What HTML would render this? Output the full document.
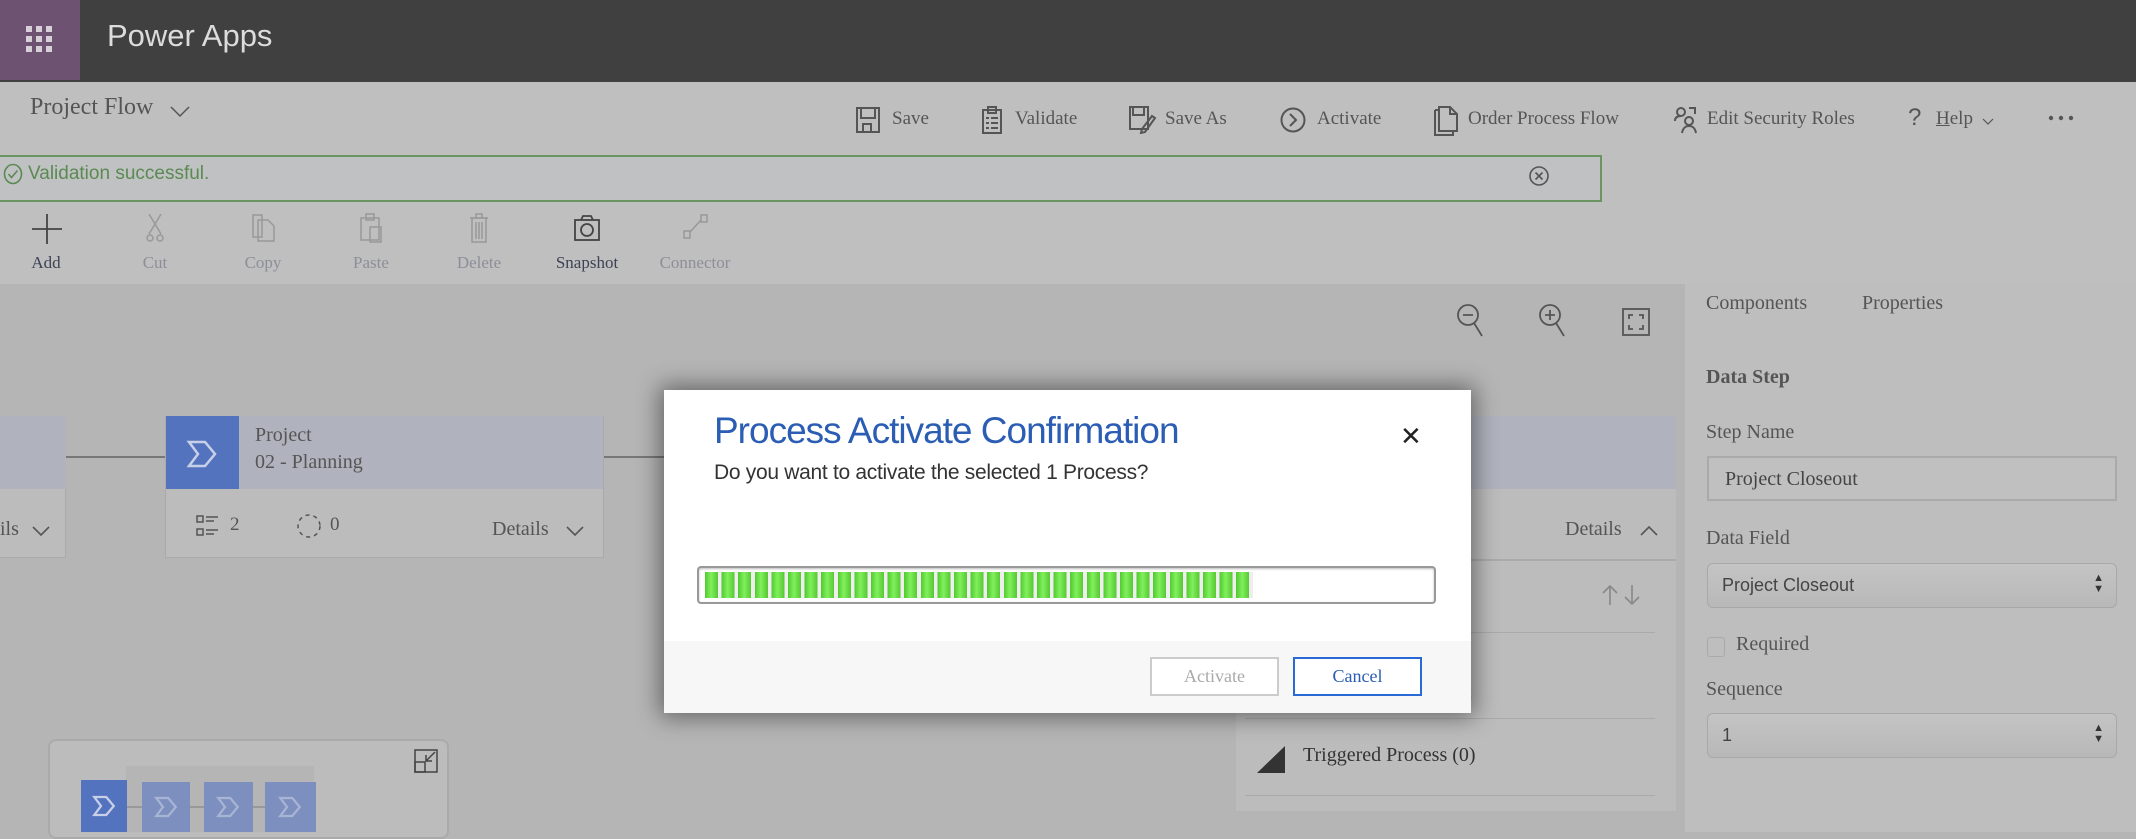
<!DOCTYPE html>
<html><head><meta charset="utf-8"><style>
*{margin:0;padding:0;box-sizing:border-box}
body{width:2136px;height:832px;overflow:hidden;background:#b5b5b5;position:relative;font-family:"Liberation Serif",serif;color:#555}
.a{position:absolute}
.s{font-family:"Liberation Sans",sans-serif}
.cmd{position:absolute;top:108px;font-size:19px;color:#555}
.tl{position:absolute;top:253px;font-size:17px;color:#8d8f98;transform:translateX(-50%)}
</style></head><body>
<div class="a" style="left:0;top:0;width:2136px;height:82px;background:#404040"></div>
<div class="a" style="left:0;top:0;width:80px;height:80px;background:#6e5272"></div>
<svg class="a" style="left:26px;top:26px" width="28" height="28" viewBox="0 0 28 28" fill="#d8d0d8"><rect x="0" y="0" width="6" height="6"/><rect x="10" y="0" width="6" height="6"/><rect x="20" y="0" width="6" height="6"/><rect x="0" y="10" width="6" height="6"/><rect x="10" y="10" width="6" height="6"/><rect x="20" y="10" width="6" height="6"/><rect x="0" y="20" width="6" height="6"/><rect x="10" y="20" width="6" height="6"/><rect x="20" y="20" width="6" height="6"/></svg>
<div class="a s" style="left:107px;top:18px;font-size:31px;color:#dcdcdc">Power Apps</div>
<div class="a" style="left:0;top:82px;width:2136px;height:202px;background:#bfbfbf"></div>
<div class="a" style="left:30px;top:94px;font-size:24px;color:#555">Project Flow</div>
<svg class="a" style="left:170px;top:106px" width="20" height="12" viewBox="0 0 20 12" fill="none" stroke="#555" stroke-width="1.5"><path d="M1 1l9 9 9-9"/></svg>
<svg class="a" style="left:856px;top:107px" width="24" height="26" viewBox="0 0 24 26" fill="none" stroke="#555" stroke-width="2"><rect x="1" y="1" width="22" height="24"/><rect x="5" y="1" width="14" height="10"/><rect x="7" y="17" width="8" height="8"/></svg>
<div class="cmd" style="left:892px">Save</div>
<svg class="a" style="left:982px;top:106px" width="20" height="28" viewBox="0 0 20 28" fill="none" stroke="#555" stroke-width="2"><rect x="1" y="4" width="18" height="23"/><rect x="6" y="1" width="8" height="6"/><path d="M4 12h3M9 12h7M4 17h3M9 17h7M4 22h3M9 22h7"/></svg>
<div class="cmd" style="left:1015px">Validate</div>
<svg class="a" style="left:1129px;top:106px" width="28" height="28" viewBox="0 0 28 28" fill="none" stroke="#555" stroke-width="2"><rect x="1" y="1" width="18" height="22"/><rect x="4" y="1" width="11" height="8"/><path d="M26 12l-10 14-4 1 1-4 10-13z"/></svg>
<div class="cmd" style="left:1165px">Save As</div>
<svg class="a" style="left:1280px;top:107px" width="26" height="26" viewBox="0 0 26 26" fill="none" stroke="#555" stroke-width="2"><circle cx="13" cy="13" r="11.5"/><path d="M10 7l6 6-6 6"/></svg>
<div class="cmd" style="left:1317px">Activate</div>
<svg class="a" style="left:1434px;top:106px" width="24" height="30" viewBox="0 0 24 30" fill="none" stroke="#555" stroke-width="2"><path d="M1 4h4M1 4v25h18v-4"/><path d="M5 1h11l7 7v17H5z"/><path d="M16 1v7h7"/></svg>
<div class="cmd" style="left:1468px">Order Process Flow</div>
<svg class="a" style="left:1674px;top:106px" width="26" height="28" viewBox="0 0 26 28" fill="none" stroke="#555" stroke-width="2"><circle cx="7" cy="6" r="4"/><path d="M1 15c0-4 3-5 6-5"/><path d="M15 2h6v6"/><circle cx="15" cy="15" r="4"/><path d="M8 27c1-5 3-7 7-7s6 2 7 7"/></svg>
<div class="cmd" style="left:1707px">Edit Security Roles</div>
<div class="cmd s" style="left:1908px;top:104px;font-size:24px;font-weight:300">?</div>
<div class="cmd" style="left:1936px"><u>H</u>elp</div>
<svg class="a" style="left:1982px;top:118px" width="12" height="8" viewBox="0 0 12 8" fill="none" stroke="#555" stroke-width="1.2"><path d="M1 1l5 5 5-5"/></svg>
<svg class="a" style="left:2048px;top:115px" width="26" height="6" fill="#555"><circle cx="3" cy="3" r="2.2"/><circle cx="13" cy="3" r="2.2"/><circle cx="23" cy="3" r="2.2"/></svg>
<div class="a" style="left:-2px;top:155px;width:1604px;height:47px;border:2px solid #6a9461;background:#c0c1c3"></div>
<svg class="a" style="left:3px;top:163px" width="20" height="22" viewBox="0 0 20 22" fill="none" stroke="#5a8a52" stroke-width="1.6"><ellipse cx="10" cy="11" rx="8.5" ry="9.5"/><path d="M5.5 11l3 3.5 6-7"/></svg>
<div class="a s" style="left:28px;top:163px;font-size:19px;color:#5a8a52">Validation successful.</div>
<svg class="a" style="left:1528px;top:165px" width="22" height="22" viewBox="0 0 22 22" fill="none" stroke="#555" stroke-width="1.6"><circle cx="11" cy="11" r="9"/><path d="M7.5 7.5l7 7M14.5 7.5l-7 7"/></svg>
<svg class="a" style="left:32px;top:214px" width="30" height="30" viewBox="0 0 30 30" stroke="#444" stroke-width="1.8"><path d="M15 0v30M0 15h30"/></svg>
<svg class="a" style="left:146px;top:214px" width="18" height="28" viewBox="0 0 18 28" fill="none" stroke="#999" stroke-width="1.5"><path d="M3 0l12 20M15 0L3 20"/><circle cx="4" cy="24" r="3"/><circle cx="14" cy="24" r="3"/></svg>
<svg class="a" style="left:252px;top:214px" width="24" height="28" viewBox="0 0 24 28" fill="none" stroke="#999" stroke-width="1.5"><path d="M1 1h9v22H1z"/><path d="M6 6h10l6 6v15H6z"/></svg>
<svg class="a" style="left:360px;top:213px" width="22" height="30" viewBox="0 0 22 30" fill="none" stroke="#999" stroke-width="1.5"><rect x="1" y="5" width="18" height="22"/><rect x="6" y="1" width="8" height="6"/><rect x="10" y="14" width="11" height="15"/></svg>
<svg class="a" style="left:469px;top:213px" width="20" height="30" viewBox="0 0 20 30" fill="none" stroke="#999" stroke-width="1.5"><path d="M1 5h18M7 5V1h6v4"/><rect x="3" y="5" width="14" height="24"/><path d="M7 9v17M10 9v17M13 9v17"/></svg>
<svg class="a" style="left:574px;top:215px" width="26" height="26" viewBox="0 0 26 26" fill="none" stroke="#444" stroke-width="1.8"><rect x="1" y="5" width="24" height="20"/><path d="M7 5l2-4h8l2 4"/><circle cx="13" cy="15" r="6"/></svg>
<svg class="a" style="left:683px;top:214px" width="26" height="26" viewBox="0 0 26 26" fill="none" stroke="#999" stroke-width="1.5"><rect x="1" y="17" width="6" height="7"/><rect x="18" y="1" width="6" height="7"/><path d="M7 18l11-12"/></svg>
<div class="tl" style="left:46px;color:#3d4254">Add</div>
<div class="tl" style="left:155px">Cut</div>
<div class="tl" style="left:263px">Copy</div>
<div class="tl" style="left:371px">Paste</div>
<div class="tl" style="left:479px">Delete</div>
<div class="tl" style="left:587px;color:#3d4254">Snapshot</div>
<div class="tl" style="left:695px">Connector</div>
<svg class="a" style="left:1456px;top:303px" width="30" height="36" viewBox="0 0 30 36" fill="none" stroke="#555" stroke-width="1.8"><circle cx="12" cy="12" r="10"/><path d="M7 12h10M18 20l8 13"/></svg>
<svg class="a" style="left:1538px;top:303px" width="30" height="36" viewBox="0 0 30 36" fill="none" stroke="#555" stroke-width="1.8"><circle cx="12" cy="12" r="10"/><path d="M7 12h10M12 7v10M18 20l8 13"/></svg>
<svg class="a" style="left:1622px;top:308px" width="28" height="28" viewBox="0 0 28 28" fill="none" stroke="#555" stroke-width="1.8"><rect x="1" y="1" width="26" height="26"/><path d="M7 11V7h4M17 7h4v4M21 17v4h-4M11 21H7v-4"/></svg>
<div class="a" style="left:1685px;top:284px;width:451px;height:548px;background:#bebebe"></div>
<div class="a" style="left:1706px;top:292px;font-size:20px">Components</div>
<div class="a" style="left:1862px;top:292px;font-size:20px">Properties</div>
<div class="a" style="left:1706px;top:366px;font-size:20px;font-weight:bold">Data Step</div>
<div class="a" style="left:1706px;top:421px;font-size:20px">Step Name</div>
<div class="a" style="left:1707px;top:456px;width:410px;height:45px;border:2px solid #aaa;background:#c0c0c0;padding:10px 16px;font-size:20px;color:#444">Project Closeout</div>
<div class="a" style="left:1706px;top:527px;font-size:20px">Data Field</div>
<div class="a s" style="left:1707px;top:563px;width:410px;height:45px;border:1px solid #a8a8a8;border-radius:6px;background:linear-gradient(#c4c4c4,#b8b8b8);padding:11px 14px;font-size:18px;color:#444">Project Closeout<span style="position:absolute;right:12px;top:9px;font-size:11px;line-height:11px;color:#333">▲<br>▼</span></div>
<div class="a" style="left:1707px;top:637px;width:18px;height:20px;border:1px solid #aaa;border-radius:3px"></div>
<div class="a" style="left:1736px;top:633px;font-size:20px">Required</div>
<div class="a" style="left:1706px;top:678px;font-size:20px">Sequence</div>
<div class="a s" style="left:1707px;top:713px;width:410px;height:45px;border:1px solid #a8a8a8;border-radius:6px;background:linear-gradient(#c4c4c4,#b8b8b8);padding:11px 14px;font-size:18px;color:#444">1<span style="position:absolute;right:12px;top:9px;font-size:11px;line-height:11px;color:#333">▲<br>▼</span></div>
<div class="a" style="left:66px;top:456px;width:100px;height:2px;background:#777"></div>
<div class="a" style="left:603px;top:456px;width:70px;height:2px;background:#777"></div>
<div class="a" style="left:-2px;top:416px;width:68px;height:142px;background:#bcbcbc;border:1px solid #aaa"></div>
<div class="a" style="left:-2px;top:416px;width:68px;height:73px;background:#b0b3bd"></div>
<div class="a" style="left:0;top:518px;font-size:20px">ils</div>
<svg class="a" style="left:32px;top:526px" width="18" height="11" viewBox="0 0 18 11" fill="none" stroke="#555" stroke-width="1.6"><path d="M1 1l8 8 8-8"/></svg>
<div class="a" style="left:165px;top:416px;width:439px;height:142px;background:#bcbcbc;border:1px solid #aaa"></div>
<div class="a" style="left:166px;top:416px;width:437px;height:73px;background:#b0b3bd"></div>
<div class="a" style="left:166px;top:416px;width:73px;height:73px;background:#5473be"></div>
<svg class="a" style="left:186px;top:438px" width="32" height="32" viewBox="0 0 32 32" fill="none" stroke="#c8d0e8" stroke-width="2.5"><path d="M3 4h16l10 12-10 12H3l9-12z"/></svg>
<div class="a" style="left:255px;top:424px;font-size:20px;color:#555">Project</div>
<div class="a" style="left:255px;top:451px;font-size:20px;color:#555">02 - Planning</div>
<svg class="a" style="left:196px;top:514px" width="26" height="24" viewBox="0 0 26 24" fill="none" stroke="#555" stroke-width="1.5"><rect x="1" y="2" width="6" height="6"/><rect x="1" y="15" width="6" height="6"/><path d="M10 3h12M10 7h8M10 16h12M10 20h8"/></svg>
<div class="a" style="left:230px;top:514px;font-size:19px">2</div>
<svg class="a" style="left:296px;top:512px" width="26" height="28" viewBox="0 0 26 28" fill="none" stroke="#555" stroke-width="1.5" stroke-dasharray="4 4"><circle cx="13" cy="14" r="11"/></svg>
<div class="a" style="left:330px;top:514px;font-size:19px">0</div>
<div class="a" style="left:492px;top:518px;font-size:20px">Details</div>
<svg class="a" style="left:566px;top:526px" width="18" height="11" viewBox="0 0 18 11" fill="none" stroke="#555" stroke-width="1.6"><path d="M1 1l8 8 8-8"/></svg>
<div class="a" style="left:1236px;top:416px;width:440px;height:395px;background:#bcbcbc"></div>
<div class="a" style="left:1236px;top:416px;width:440px;height:73px;background:#b0b3bd"></div>
<div class="a" style="left:1565px;top:518px;font-size:20px">Details</div>
<svg class="a" style="left:1640px;top:525px" width="18" height="11" viewBox="0 0 18 11" fill="none" stroke="#555" stroke-width="1.6"><path d="M1 10l8-8 8 8"/></svg>
<div class="a" style="left:1236px;top:559px;width:440px;height:2px;background:#aaa"></div>
<svg class="a" style="left:1600px;top:584px" width="50" height="22" viewBox="0 0 50 22" fill="none" stroke="#888" stroke-width="1.6"><path d="M10 21V2M3 9l7-7 7 7M32 1v19M25 13l7 7 7-7"/></svg>
<div class="a" style="left:1245px;top:632px;width:410px;height:1px;background:#aaa"></div>
<div class="a" style="left:1245px;top:718px;width:410px;height:1px;background:#aaa"></div>
<div class="a" style="left:1466px;top:681px;font-size:20px;color:#555">t</div>
<svg class="a" style="left:1257px;top:746px" width="28" height="27"><path d="M28 0V27H0z" fill="#333"/></svg>
<div class="a" style="left:1303px;top:744px;font-size:20px;color:#333">Triggered Process (0)</div>
<div class="a" style="left:1245px;top:795px;width:410px;height:1px;background:#aaa"></div>
<div class="a" style="left:48px;top:739px;width:401px;height:100px;border:2px solid #aaa;border-radius:8px;background:#bcbcbc"></div>
<div class="a" style="left:126px;top:766px;width:188px;height:66px;background:#b5b5b5"></div>
<svg class="a" style="left:414px;top:749px" width="24" height="24" viewBox="0 0 24 24" fill="none" stroke="#444" stroke-width="1.5"><rect x="1" y="1" width="22" height="22"/><rect x="1" y="13" width="10" height="10"/><path d="M21 3l-9 9M12 6v6h6"/></svg>
<div class="a" style="left:127px;top:806px;width:140px;height:2px;background:#999"></div>
<div class="a" style="left:81px;top:780px;width:46px;height:52px;background:#5473be"></div>
<div class="a" style="left:142px;top:782px;width:48px;height:50px;background:#7c8fbf"></div>
<div class="a" style="left:204px;top:782px;width:49px;height:50px;background:#7c8fbf"></div>
<div class="a" style="left:265px;top:782px;width:51px;height:50px;background:#7c8fbf"></div>
<svg class="a" style="left:92px;top:794px" width="24" height="24" viewBox="0 0 32 32" fill="none" stroke="#c8d0e8" stroke-width="3"><path d="M3 4h16l10 12-10 12H3l9-12z"/></svg>
<svg class="a" style="left:154px;top:795px" width="24" height="24" viewBox="0 0 32 32" fill="none" stroke="#a8b4d4" stroke-width="3"><path d="M3 4h16l10 12-10 12H3l9-12z"/></svg>
<svg class="a" style="left:216px;top:795px" width="24" height="24" viewBox="0 0 32 32" fill="none" stroke="#a8b4d4" stroke-width="3"><path d="M3 4h16l10 12-10 12H3l9-12z"/></svg>
<svg class="a" style="left:278px;top:795px" width="24" height="24" viewBox="0 0 32 32" fill="none" stroke="#a8b4d4" stroke-width="3"><path d="M3 4h16l10 12-10 12H3l9-12z"/></svg>
<div class="a" style="left:664px;top:390px;width:807px;height:323px;background:#fff;box-shadow:0 0 22px 4px rgba(0,0,0,.45)"></div>
<div class="a" style="left:664px;top:641px;width:807px;height:72px;background:#f7f7f7"></div>
<div class="a s" style="left:714px;top:410px;font-size:37px;color:#2a5db3;letter-spacing:-1px">Process Activate Confirmation</div>
<div class="a s" style="left:714px;top:461px;font-size:21px;color:#333;letter-spacing:-0.3px">Do you want to activate the selected 1 Process?</div>
<div class="a s" style="left:1400px;top:421px;font-size:26px;color:#222">✕</div>
<div class="a" style="left:697px;top:566px;width:739px;height:38px;border:2px solid #999;border-radius:4px;background:#fff;box-shadow:inset 0 1px 2px #bbb"></div>
<div class="a" style="left:705px;top:572px;width:548px;height:26px;background:repeating-linear-gradient(90deg,#52c930 0,#80f05c 6px,#56c832 13px,#eee 13px,#eee 16.6px)"></div>
<div class="a" style="left:1150px;top:657px;width:129px;height:39px;border:2px solid #ccc;background:#fff;text-align:center;line-height:35px;font-size:18px;color:#aaa">Activate</div>
<div class="a" style="left:1293px;top:657px;width:129px;height:39px;border:2px solid #2a6ad6;background:#fff;text-align:center;line-height:35px;font-size:18px;color:#2a5db3">Cancel</div>
</body></html>
